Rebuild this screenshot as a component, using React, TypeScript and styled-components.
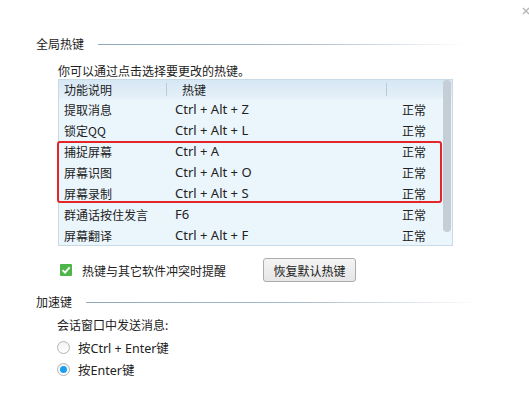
import React from "react";
import styled, { createGlobalStyle } from "styled-components";

const GlobalStyle = createGlobalStyle`
  html, body {
    margin: 0;
    padding: 0;
    background: #ffffff;
  }
  body {
    font-family: "Noto Sans", "Noto Sans CJK SC", sans-serif;
    font-size: 12px;
    color: #222;
  }
`;

const Page = styled.div`
  position: relative;
  width: 529px;
  height: 408px;
  overflow: hidden;
  background: #fff;
  padding-top: 36px;
  box-sizing: border-box;
`;

const CloseMark = styled.svg`
  position: absolute;
  top: 7px;
  left: 522px;
`;

const SectionHead = styled.div`
  display: flex;
  align-items: center;
  gap: 14px;
  height: 16px;
  padding-left: 36px;
  padding-right: ${(p: { $end: number }) => p.$end}px;
  font-family: "Noto Sans CJK SC", sans-serif;
  font-size: 12px;
  line-height: 16px;
  color: #222;
`;

const HeadLine = styled.div`
  flex: 1;
  height: 1px;
  background: linear-gradient(to right, #8ea7ba 0%, #a9bccb 55%, rgba(200, 214, 224, 0) 100%);
`;

const Indent = styled.div`
  padding-left: 58px;
`;

const Hint = styled.div`
  margin-top: 11px;
  height: 16px;
  line-height: 16px;
  font-family: "Noto Sans CJK SC", sans-serif;
`;

const Table = styled.div`
  position: relative;
  width: 395px;
  height: 167px;
  box-sizing: border-box;
  border: 1px solid #c9dae7;
  background: #ebf5fc;
`;

const cols = "108px 220px 1fr";

const HeaderRow = styled.div`
  display: grid;
  grid-template-columns: ${cols};
  height: 19px;
  align-items: center;
  background: linear-gradient(to bottom, #d6e7f4, #e6f1f9);
  font-family: "Noto Sans CJK SC", sans-serif;
`;

const HeaderCell = styled.div<{ $pad: number; $divider?: boolean }>`
  position: relative;
  padding-left: ${(p) => p.$pad}px;
  line-height: 19px;
  &::after {
    content: "";
    display: ${(p) => (p.$divider ? "block" : "none")};
    position: absolute;
    right: 0;
    top: 3px;
    height: 13px;
    width: 1px;
    background: #b9cbd9;
  }
`;

const Row = styled.div`
  display: grid;
  grid-template-columns: ${cols};
  height: 21px;
  align-items: center;
`;

const Cell = styled.div<{ $pad: number; $latin?: boolean }>`
  padding-left: ${(p) => p.$pad}px;
  line-height: 21px;
  white-space: nowrap;
  font-family: ${(p) =>
    p.$latin ? `"Noto Sans", "Noto Sans CJK SC", sans-serif` : `"Noto Sans CJK SC", sans-serif`};
  font-size: ${(p) => (p.$latin ? 13 : 12)}px;
`;

const ScrollThumb = styled.div`
  position: absolute;
  top: 0;
  right: 1px;
  width: 8px;
  height: 152px;
  border-radius: 4px;
  background: #c5ced6;
`;

const Highlight = styled.div`
  position: absolute;
  left: -2px;
  top: 61px;
  width: 385px;
  height: 62px;
  box-sizing: border-box;
  border: 2px solid #e4262b;
  border-radius: 3px;
  pointer-events: none;
`;

const OptionBar = styled.div`
  display: flex;
  align-items: center;
  margin-top: 12px;
  height: 24px;
  padding-left: 2px;
`;

const CheckLabel = styled.label`
  display: flex;
  align-items: center;
  gap: 10px;
  width: 203px;
  font-family: "Noto Sans CJK SC", sans-serif;
`;

const CheckBox = styled.span`
  display: inline-flex;
  align-items: center;
  justify-content: center;
  width: 12px;
  height: 12px;
  background: #4db649;
  border-radius: 1px;
`;

const Button = styled.button`
  width: 93px;
  height: 24px;
  padding: 0;
  border: 1px solid #acacac;
  border-radius: 3px;
  background: linear-gradient(to bottom, #f4f4f4, #e6e6e6);
  font-family: "Noto Sans CJK SC", sans-serif;
  font-size: 12px;
  color: #222;
`;

const SubHead = styled(SectionHead)`
  margin-top: 12px;
`;

const SubHint = styled.div`
  margin-top: 7px;
  padding-left: 57px;
  height: 16px;
  line-height: 16px;
  font-family: "Noto Sans CJK SC", sans-serif;
`;

const RadioList = styled.div`
  display: flex;
  flex-direction: column;
  margin-top: 3px;
  padding-left: 57px;
`;

const RadioRow = styled.label`
  display: flex;
  align-items: center;
  gap: 8px;
  height: 22px;
  font-family: "Noto Sans", "Noto Sans CJK SC", sans-serif;
  font-size: 12.5px;
`;

const RadioDot = styled.span<{ $on?: boolean }>`
  display: inline-flex;
  align-items: center;
  justify-content: center;
  width: 13px;
  height: 13px;
  box-sizing: border-box;
  border: 1px solid #b4b4b4;
  border-radius: 50%;
  background: linear-gradient(to bottom, #f2f2f2, #ffffff);
  &::after {
    content: "";
    display: ${(p) => (p.$on ? "block" : "none")};
    width: 7px;
    height: 7px;
    border-radius: 50%;
    background: #1c9ef0;
  }
`;

const rows = [
  ["提取消息", "Ctrl + Alt + Z"],
  ["锁定QQ", "Ctrl + Alt + L"],
  ["捕捉屏幕", "Ctrl + A"],
  ["屏幕识图", "Ctrl + Alt + O"],
  ["屏幕录制", "Ctrl + Alt + S"],
  ["群通话按住发言", "F6"],
  ["屏幕翻译", "Ctrl + Alt + F"],
];

const App: React.FC = () => {
  const [sendMode, setSendMode] = React.useState("enter");

  return (
    <>
      <GlobalStyle />
      <Page>
        <CloseMark width="8" height="8" viewBox="0 0 8 8">
          <path d="M1 1 L7 7 M7 1 L1 7" stroke="#b5b5b5" strokeWidth="1.4" fill="none" />
        </CloseMark>

        <SectionHead $end={62}>
          全局热键
          <HeadLine />
        </SectionHead>

        <Indent>
          <Hint>你可以通过点击选择要更改的热键。</Hint>
          <Table>
            <HeaderRow>
              <HeaderCell $pad={5} $divider>功能说明</HeaderCell>
              <HeaderCell $pad={15} $divider>热键</HeaderCell>
              <HeaderCell $pad={15} />
            </HeaderRow>
            {rows.map(([name, key]) => (
              <Row key={name}>
                <Cell $pad={5}>{name}</Cell>
                <Cell $pad={8} $latin>{key}</Cell>
                <Cell $pad={15}>正常</Cell>
              </Row>
            ))}
            <ScrollThumb />
            <Highlight />
          </Table>

          <OptionBar>
            <CheckLabel>
              <CheckBox>
                <svg width="10" height="10" viewBox="0 0 10 10">
                  <path d="M1.5 5.2 L4 7.6 L8.6 2.4" stroke="#fff" strokeWidth="1.8" fill="none" />
                </svg>
              </CheckBox>
              热键与其它软件冲突时提醒
            </CheckLabel>
            <Button type="button">恢复默认热键</Button>
          </OptionBar>
        </Indent>

        <SubHead $end={49}>
          加速键
          <HeadLine />
        </SubHead>
        <SubHint>会话窗口中发送消息:</SubHint>
        <RadioList>
          <RadioRow onClick={() => setSendMode("ctrl")}>
            <RadioDot $on={sendMode === "ctrl"} />
            按Ctrl + Enter键
          </RadioRow>
          <RadioRow onClick={() => setSendMode("enter")}>
            <RadioDot $on={sendMode === "enter"} />
            按Enter键
          </RadioRow>
        </RadioList>
      </Page>
    </>
  );
};

export default App;
